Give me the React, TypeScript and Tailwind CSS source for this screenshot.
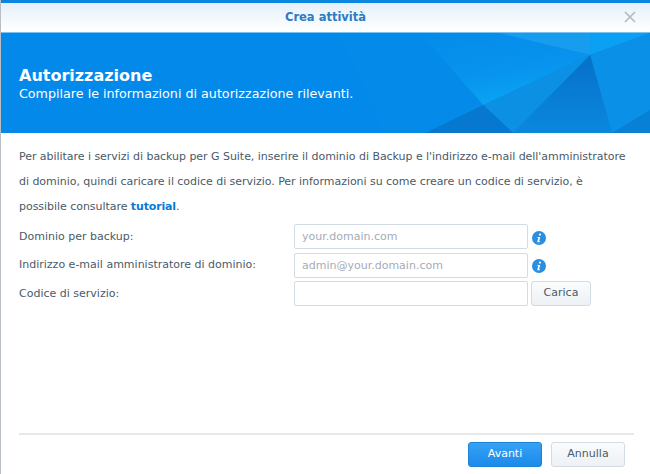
import React from 'react';

const font = "font-['DejaVu_Sans',Verdana,sans-serif]";

const InfoIcon: React.FC = () => (
  <svg width="14" height="14" viewBox="0 0 14 14" className="shrink-0">
    <circle cx="7" cy="7" r="7" fill="#2a8fe0" />
    <circle cx="8" cy="3.6" r="1.1" fill="#fff" />
    <path d="M5.6 6h2.6L7.1 10.2h.9l-.3 1H5.2L6.3 7H5.4z" fill="#fff" />
  </svg>
);

const BannerArt: React.FC = () => (
  <svg className="absolute inset-0 h-full w-full" viewBox="0 0 650 100" preserveAspectRatio="none">
    <defs>
      <linearGradient id="mid" x1="0.2" y1="0" x2="0.55" y2="1">
        <stop offset="0" stopColor="#058cea" />
        <stop offset="0.55" stopColor="#0793ee" />
        <stop offset="1" stopColor="#0aa6f3" />
      </linearGradient>
      <linearGradient id="dark" x1="0.5" y1="0" x2="0.5" y2="1">
        <stop offset="0" stopColor="#0670c8" />
        <stop offset="1" stopColor="#0a88de" />
      </linearGradient>
    </defs>
    <polygon points="338,0 420,0 483,72 425,100 385,100" fill="#048bea" />
    <polygon points="420,0 498,0 590,22 483,72" fill="url(#mid)" />
    <polygon points="498,0 590,0 590,22" fill="#179cee" />
    <polygon points="590,0 650,0 590,22" fill="#0ba0f4" />
    <polygon points="590,22 650,0 650,100 612,100" fill="#0a90e7" />
    <polygon points="590,22 483,72 513,100" fill="#0b90e4" />
    <polygon points="590,22 513,100 612,100" fill="url(#dark)" />
    <polygon points="483,72 425,100 513,100" fill="#0678cf" />
    <polygon points="650,77 650,100 612,100" fill="#0780d6" />
  </svg>
);

const Row: React.FC<{ label: string; children: React.ReactNode }> = ({ label, children }) => (
  <div className="flex h-[25px] items-center">
    <label className="w-[275px] shrink-0 pt-[1px] text-[#4a5a68]">{label}</label>
    {children}
  </div>
);

const Field: React.FC<{ placeholder?: string }> = ({ placeholder }) => (
  <input
    placeholder={placeholder}
    className={`h-[25px] w-[234px] rounded-[2px] border border-[#d3dbe3] bg-white px-[7px] text-[11px] outline-none placeholder:text-[#a4acb6] ${font}`}
  />
);

export default function App() {
  return (
    <div className={`relative flex h-[474px] w-[650px] flex-col overflow-hidden border-l border-[#b9bec4] bg-white text-[11px] ${font}`}>
      <div className="h-[3px] shrink-0 bg-[#0a86e0]" />
      <div className="flex h-[29px] shrink-0 items-center bg-gradient-to-b from-[#e6f0fa] to-white">
        <div className="flex-1 pt-[1px] text-center text-[11.5px] font-bold text-[#2b7cc4]">Crea attività</div>
        <svg width="12" height="12" viewBox="0 0 12 12" className="absolute left-[623px] top-[11px]">
          <path d="M1 1l10 10M11 1L1 11" stroke="#b4b9bd" strokeWidth="1.6" />
        </svg>
      </div>
      <div className="relative h-[101px] shrink-0 border-t border-[#7cc3f4] bg-[#0389ea]">
        <BannerArt />
        <div className="relative flex h-full flex-col justify-center pt-[3px] pl-[18px] text-white">
          <div className="text-[16px] leading-[18px] font-bold">Autorizzazione</div>
          <div className="text-[12.7px] leading-[17px]">Compilare le informazioni di autorizzazione rilevanti.</div>
        </div>
      </div>
      <div className="flex flex-1 flex-col px-[18px] pt-[11px]">
        <p className="w-[612px] text-[11px] leading-[25px] tracking-[-0.04px] text-[#4a5a68]">
          Per abilitare i servizi di backup per G Suite, inserire il dominio di Backup e l'indirizzo e-mail dell'amministratore di dominio, quindi caricare il codice di servizio. Per informazioni su come creare un codice di servizio, è possibile consultare <a className="font-bold tracking-[-0.15px] text-[#0a7bd6]">tutorial</a>.
        </p>
        <div className="mt-[5px] flex flex-col gap-[3.5px]">
          <Row label="Dominio per backup:">
            <Field placeholder="your.domain.com" />
            <span className="mt-[2px] ml-[4px]"><InfoIcon /></span>
          </Row>
          <Row label="Indirizzo e-mail amministratore di dominio:">
            <Field placeholder="admin@your.domain.com" />
            <span className="mt-[2px] ml-[4px]"><InfoIcon /></span>
          </Row>
          <Row label="Codice di servizio:">
            <Field />
            <button className="ml-[3px] h-[25px] w-[60px] rounded-[3px] border border-[#d3dbe3] bg-gradient-to-b from-[#fafcfd] to-[#edf1f5] text-[#4a5a68]">Carica</button>
          </Row>
        </div>
        <div className="mt-auto mb-[7px] w-[615px] border-t-2 border-[#e6e8ea] pt-[7px]">
          <div className="flex justify-end gap-[9px] pr-[9px]">
            <button className="h-[25px] w-[74px] rounded-[3px] border border-[#1a82d8] bg-gradient-to-b from-[#35a2f4] to-[#1a8aea] text-white">Avanti</button>
            <button className="h-[25px] w-[74px] rounded-[3px] border border-[#d3dbe3] bg-gradient-to-b from-[#fafcfd] to-[#edf1f5] text-[#4a5a68]">Annulla</button>
          </div>
        </div>
      </div>
    </div>
  );
}
